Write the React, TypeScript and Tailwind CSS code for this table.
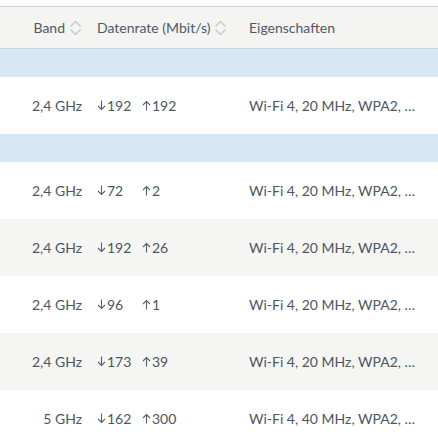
import React from 'react';

interface Row {
    band: string;
    down: number;
    up: number;
    props: string;
}

// groups are separated by a light blue band (collapsed group header)
const groups: Row[][] = [
    [{ band: '2,4 GHz', down: 192, up: 192, props: 'Wi-Fi 4, 20 MHz, WPA2, …' }],
    [
        { band: '2,4 GHz', down: 72, up: 2, props: 'Wi-Fi 4, 20 MHz, WPA2, …' },
        { band: '2,4 GHz', down: 192, up: 26, props: 'Wi-Fi 4, 20 MHz, WPA2, …' },
        { band: '2,4 GHz', down: 96, up: 1, props: 'Wi-Fi 4, 20 MHz, WPA2, …' },
        { band: '2,4 GHz', down: 173, up: 39, props: 'Wi-Fi 4, 20 MHz, WPA2, …' },
        { band: '5 GHz', down: 162, up: 300, props: 'Wi-Fi 4, 40 MHz, WPA2, …' },
    ],
];

function SortIcon() {
    return (
        <svg width="13" height="16" viewBox="0 0 13 16" fill="none" stroke="#c4c7ca" strokeWidth="1.3" className="ml-1 shrink-0">
            <path d="M1.5 6.5 L6.5 1.5 L11.5 6.5" />
            <path d="M1.5 9.5 L6.5 14.5 L11.5 9.5" />
        </svg>
    );
}

function Arrow({ up }: { up?: boolean }) {
    return (
        <svg width="9" height="11" viewBox="0 0 9 11" fill="none" stroke="#55606b" strokeWidth="1.1" className="mr-[1px] shrink-0">
            {up ? (
                <>
                    <path d="M4.5 10.5 V1.5" />
                    <path d="M1 5 L4.5 1.5 L8 5" />
                </>
            ) : (
                <>
                    <path d="M4.5 0.5 V9.5" />
                    <path d="M1 6 L4.5 9.5 L8 6" />
                </>
            )}
        </svg>
    );
}

export default function App() {
    return (
        <main className="w-[438px] h-[445px] overflow-hidden bg-white pt-[6px] text-[14px] text-[#4b5663]" style={{ fontFamily: 'Lato, "Open Sans", sans-serif' }}>
            <div className="flex items-center h-[43px] bg-[#f4f4f3] border-y border-[#c8d6e3] text-[#4f5964]">
                <div className="w-[82px] flex items-center justify-end">
                    Band
                    <SortIcon />
                </div>
                <div className="w-[167px] flex items-center pl-[15px]">
                    Datenrate (Mbit/s)
                    <SortIcon />
                </div>
                <div>Eigenschaften</div>
            </div>
            {groups.map((rows, gi) => (
                <div key={gi}>
                    <div className="h-[28px] bg-[#d7e7f5]" />
                    {rows.map((r, i) => (
                        <div key={i} className={`flex items-center h-[57px] ${i % 2 === 1 ? 'bg-[#f5f5f4]' : 'bg-white'}`}>
                            <div className="w-[82px] text-right">{r.band}</div>
                            <div className="w-[167px] flex items-center pl-[15px]">
                                <span className="w-[45px] flex items-center">
                                    <Arrow />
                                    {r.down}
                                </span>
                                <span className="flex items-center">
                                    <Arrow up />
                                    {r.up}
                                </span>
                            </div>
                            <div className="whitespace-nowrap">{r.props}</div>
                        </div>
                    ))}
                </div>
            ))}
        </main>
    );
}
